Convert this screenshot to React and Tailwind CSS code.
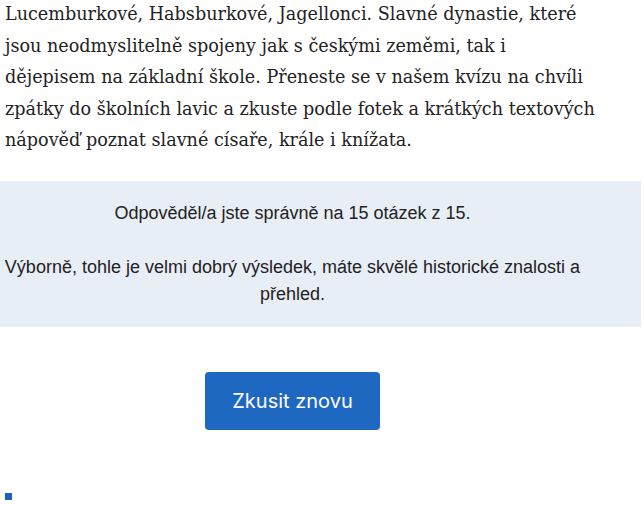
export default function App() {
  return (
    <div className="w-[644px] h-[506px] bg-white overflow-hidden relative">
      <div className="w-[585px]">
        <p
          className="pl-[5px] pt-0 text-[17.6px] leading-[31.6px] text-[#222] -mt-[1px] whitespace-nowrap"
          style={{ fontFamily: '"DejaVu Serif", serif' }}
        >
          Lucemburkové, Habsburkové, Jagellonci. Slavné dynastie, které
          <br />
          jsou neodmyslitelně spojeny jak s českými zeměmi, tak i
          <br />
          dějepisem na základní škole. Přeneste se v našem kvízu na chvíli
          <br />
          zpátky do školních lavic a zkuste podle fotek a krátkých textových
          <br />
          nápověď poznat slavné císaře, krále i knížata.
        </p>
      </div>
      <div
        className="mt-[24px] w-[641px] h-[146px] bg-[#e8eef6] pt-[19px] text-[18px] leading-[27px] text-[#222]"
        style={{ fontFamily: '"Liberation Sans", Arial, sans-serif' }}
      >
        <div className="w-[585px] text-center">
          <p>Odpověděl/a jste správně na 15 otázek z 15.</p>
          <p className="mt-[27px]">
            Výborně, tohle je velmi dobrý výsledek, máte skvělé historické znalosti a přehled.
          </p>
        </div>
      </div>
      <div className="w-[585px] flex justify-center mt-[45px]">
        <button
          className="w-[175px] h-[58px] rounded-[4px] bg-[#1f68c2] text-white text-[20px] flex items-center justify-center"
          style={{ fontFamily: 'Inter, "Noto Sans", sans-serif' }}
        >
          Zkusit znovu
        </button>
      </div>
      <div className="ml-[5px] mt-[63px] w-[7px] h-[7px] bg-[#1e5fc0]" />
    </div>
  );
}
